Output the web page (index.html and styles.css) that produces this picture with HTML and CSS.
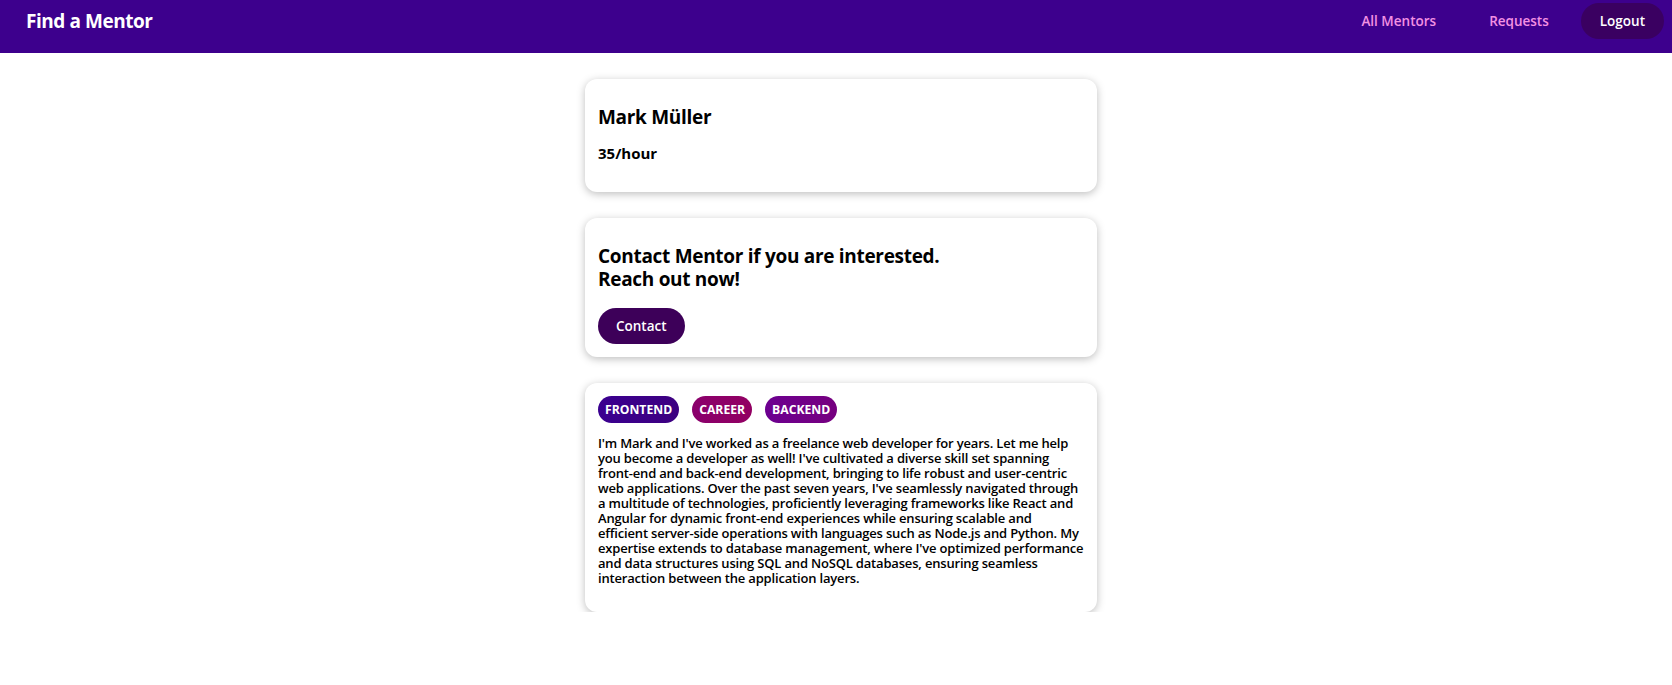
FILE: index.html
```html
<!DOCTYPE html>
<html lang="en">
<head>
<meta charset="utf-8">
<title>Find a Mentor</title>
<link rel="stylesheet" href="styles.css">
</head>
<body>
<header class="topbar">
  <h1 class="brand">Find a Mentor</h1>
  <nav class="nav">
    <a class="nav-link" href="#">All Mentors</a>
    <a class="nav-link" href="#">Requests</a>
    <button class="logout">Logout</button>
  </nav>
</header>
<main class="main">
  <section class="card">
    <h2 class="name">Mark Müller</h2>
    <h3 class="rate">35/hour</h3>
  </section>
  <section class="card">
    <h2 class="contact-title">Contact Mentor if you are interested.<br>Reach out now!</h2>
    <button class="contact-btn">Contact</button>
  </section>
  <section class="card">
    <div class="tags">
      <span class="tag tag-frontend">FRONTEND</span>
      <span class="tag tag-career">CAREER</span>
      <span class="tag tag-backend">BACKEND</span>
    </div>
    <p class="desc">I'm Mark and I've worked as a freelance web developer for years. Let me help you become a developer as well! I've cultivated a diverse skill set spanning front-end and back-end development, bringing to life robust and user-centric web applications. Over the past seven years, I've seamlessly navigated through a multitude of technologies, proficiently leveraging frameworks like React and Angular for dynamic front-end experiences while ensuring scalable and efficient server-side operations with languages such as Node.js and Python. My expertise extends to database management, where I've optimized performance and data structures using SQL and NoSQL databases, ensuring seamless interaction between the application layers.</p>
  </section>
</main>
</body>
</html>
```
FILE: styles.css
```css
* { box-sizing: border-box; }
body {
  margin: 0;
  font-family: "Open Sans", "Liberation Sans", sans-serif;
  color: #000;
  background: #fff;
}
.topbar {
  height: 53px;
  background: #3d008d;
  display: flex;
  justify-content: space-between;
  align-items: flex-start;
  padding: 3px 8px 0 26px;
}
.brand {
  margin: 0;
  color: #fff;
  font-size: 19px;
  font-weight: 700;
  line-height: 36px;
  letter-spacing: -0.45px;
}
.nav {
  display: flex;
  align-items: center;
  gap: 11px;
}
.nav-link {
  color: #f391e3;
  text-decoration: none;
  font-size: 13.5px;
  font-weight: 600;
  line-height: 36px;
  padding: 0 21px;
}
.logout {
  font-family: inherit;
  border: none;
  background: #3a0061;
  color: #fff;
  font-size: 13.5px;
  font-weight: 600;
  height: 36px;
  padding: 0 19px;
  border-radius: 18px;
}
.main {
  display: flex;
  flex-direction: column;
  align-items: center;
  gap: 26px;
  padding: 26px 0 0 10px;
}
.card {
  width: 512px;
  background: #fff;
  border-radius: 12px;
  box-shadow: 0 2px 8px rgba(0, 0, 0, 0.26);
  padding: 13px;
}
.name {
  margin: 13px 0 0;
  font-size: 19px;
  line-height: 24px;
  font-weight: 700;
  letter-spacing: -0.3px;
}
.rate {
  margin: 14px 0 16px;
  font-size: 15px;
  line-height: 20px;
  font-weight: 700;
}
.contact-title {
  margin: 14px 0 17px;
  font-size: 19px;
  line-height: 23px;
  font-weight: 700;
  letter-spacing: -0.3px;
}
.contact-btn {
  font-family: inherit;
  border: none;
  background: #3d0059;
  color: #fff;
  font-size: 13.5px;
  font-weight: 600;
  height: 36px;
  padding: 0 18px;
  border-radius: 18px;
  display: block;
}
.tags {
  display: flex;
  gap: 13px;
}
.tag {
  color: #fff;
  font-size: 12.2px;
  font-weight: 700;
  height: 27px;
  line-height: 27px;
  padding: 0 7px;
  border-radius: 14px;
}
.tag-frontend { background: linear-gradient(90deg, #3a0090, #3d0080); }
.tag-career { background: linear-gradient(90deg, #8a006c, #920062); }
.tag-backend { background: linear-gradient(90deg, #6c0090, #76007f); }
.desc {
  margin: 13px 0 13px;
  font-size: 13px;
  line-height: 15px;
  font-weight: 600;
  letter-spacing: -0.18px;
}
```
